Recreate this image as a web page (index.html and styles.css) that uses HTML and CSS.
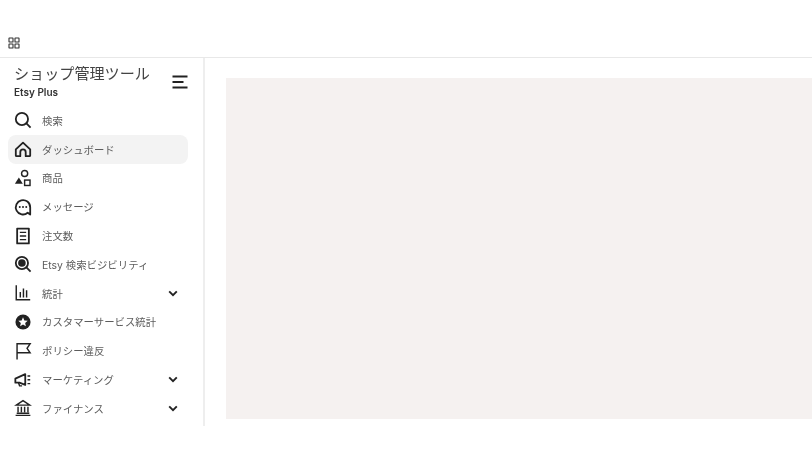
FILE: index.html
```html
<!DOCTYPE html>
<html lang="ja">
<head>
    <meta charset="UTF-8">
    <meta name="viewport" content="width=device-width, initial-scale=1.0">
    <title>ショップ管理ツール</title>
    <link rel="stylesheet" href="styles.css">
</head>
<body>
    <header class="top-bar">
        <svg class="apps-icon" viewBox="0 0 12 12" width="12" height="12">
            <rect x="1" y="1" width="4" height="4" rx="0.3"/>
            <rect x="7" y="1" width="4" height="4" rx="0.3"/>
            <rect x="1" y="7" width="4" height="4" rx="0.3"/>
            <rect x="7" y="7" width="4" height="4" rx="0.3"/>
        </svg>
    </header>

    <div class="layout">
        <aside class="sidebar">
            <div class="shop-head">
                <div class="shop-title">
                    <div class="shop-name">ショップ管理ツール</div>
                    <div class="shop-plan">Etsy Plus</div>
                </div>
                <svg class="menu-icon" viewBox="0 0 16 14" width="16" height="14">
                    <path d="M0.5 1.5H15.5M0.5 7H11.5M0.5 12.5H15.5"/>
                </svg>
            </div>

            <nav class="nav">
                <a class="nav-item">
                    <svg class="nav-icon" viewBox="0 0 20 20"><circle cx="8.8" cy="8.8" r="6.8"/><path d="M13.8 13.8L18.4 18.4"/></svg>
                    <span class="nav-label">検索</span>
                </a>
                <a class="nav-item active">
                    <svg class="nav-icon" viewBox="0 0 20 20"><path d="M2 10.5L10 3L18 10.5V17.2A0.8 0.8 0 0 1 17.2 18H13V13.5A3 3 0 0 0 7 13.5V18H2.8A0.8 0.8 0 0 1 2 17.2Z"/></svg>
                    <span class="nav-label">ダッシュボード</span>
                </a>
                <a class="nav-item">
                    <svg class="nav-icon" viewBox="0 0 20 20"><circle class="thin" cx="11.8" cy="5" r="3.4"/><path class="solid no-line" d="M5.4 9.4L9.8 16.4H1Z"/><rect class="thin" x="11.8" y="12.3" width="6" height="6"/></svg>
                    <span class="nav-label">商品</span>
                </a>
                <a class="nav-item">
                    <svg class="nav-icon" viewBox="0 0 20 20"><path d="M18 18.4L15.2 16.4A8 8 0 1 1 18 10.2V18.4Z"/><circle class="solid no-line" cx="6.4" cy="10" r="1.1"/><circle class="solid no-line" cx="10" cy="10" r="1.1"/><circle class="solid no-line" cx="13.6" cy="10" r="1.1"/></svg>
                    <span class="nav-label">メッセージ</span>
                </a>
                <a class="nav-item">
                    <svg class="nav-icon" viewBox="0 0 20 20"><rect x="3.5" y="1.8" width="13" height="16.4"/><path class="thin" d="M6.5 6H13.5M6.5 10H13.5M6.5 14H13.5"/></svg>
                    <span class="nav-label">注文数</span>
                </a>
                <a class="nav-item">
                    <svg class="nav-icon" viewBox="0 0 20 20"><circle cx="8.8" cy="8.8" r="6.8"/><circle class="solid no-line" cx="8.8" cy="8.8" r="4.2"/><path d="M13.8 13.8L18.4 18.4"/></svg>
                    <span class="nav-label">Etsy 検索ビジビリティ</span>
                </a>
                <a class="nav-item">
                    <svg class="nav-icon" viewBox="0 0 20 20"><path class="thin" d="M2.5 1.5V17.6H18"/><path class="thin" d="M7 9V15M10.5 5V15M14 7V15"/></svg>
                    <span class="nav-label">統計</span>
                    <svg class="chevron" viewBox="0 0 10 7" width="10" height="7"><path d="M1.2 1.4L5 5.2L8.8 1.4"/></svg>
                </a>
                <a class="nav-item">
                    <svg class="nav-icon" viewBox="0 0 20 20"><circle class="solid no-line" cx="10" cy="10" r="8.4"/><path class="star" d="M10 4.8L11.5 8.2L15.2 8.6L12.4 11L13.2 14.7L10 12.8L6.8 14.7L7.6 11L4.8 8.6L8.5 8.2Z"/></svg>
                    <span class="nav-label">カスタマーサービス統計</span>
                </a>
                <a class="nav-item">
                    <svg class="nav-icon" viewBox="0 0 20 20"><path class="thin" d="M3.4 19.5V2H17.9L14.5 7L17.9 12H3.4"/></svg>
                    <span class="nav-label">ポリシー違反</span>
                </a>
                <a class="nav-item">
                    <svg class="nav-icon" viewBox="0 0 20 20"><path d="M12.5 3.5V15.5L6 13H1.5V8.5L12.5 3.5Z"/><path class="thin" d="M5 13L6.2 16.5H9"/><path class="thin" d="M15 5.5H18M15 9.8H18M15 14H18"/></svg>
                    <span class="nav-label">マーケティング</span>
                    <svg class="chevron" viewBox="0 0 10 7" width="10" height="7"><path d="M1.2 1.4L5 5.2L8.8 1.4"/></svg>
                </a>
                <a class="nav-item">
                    <svg class="nav-icon" viewBox="0 0 20 20"><path class="thin" d="M10 1.8L17.5 6.8H2.5Z"/><path class="thin" d="M4.5 8.5V15M8.2 8.5V15M11.8 8.5V15M15.5 8.5V15"/><path class="thin" d="M3 15.8H17M1.8 18.2H18.2"/></svg>
                    <span class="nav-label">ファイナンス</span>
                    <svg class="chevron" viewBox="0 0 10 7" width="10" height="7"><path d="M1.2 1.4L5 5.2L8.8 1.4"/></svg>
                </a>
            </nav>
        </aside>

        <main class="content">
            <div class="placeholder"></div>
        </main>
    </div>
</body>
</html>
```

FILE: styles.css
```css
html, body {
    margin: 0;
    padding: 0;
    background: #fff;
    overflow: hidden;
}

body {
    width: 812px;
    height: 457px;
    font-family: "Inter", "Noto Sans CJK JP", sans-serif;
    color: #222;
}

.top-bar {
    height: 58px;
    box-sizing: border-box;
    border-bottom: 1px solid #e8e8e8;
    display: flex;
    align-items: flex-end;
    padding: 0 0 8px 7.5px;
}

.apps-icon {
    fill: none;
    stroke: #333;
    stroke-width: 1.1;
    filter: blur(0.3px);
}

.layout {
    display: flex;
    height: 368px;
}

.sidebar {
    width: 205px;
    box-sizing: border-box;
    border-right: 2px solid #eeeeee;
    padding: 7px 0 0 8px;
    filter: blur(0.35px);
}

.shop-head {
    display: flex;
    align-items: flex-start;
    justify-content: space-between;
    width: 180px;
    height: 38px;
    padding-left: 6px;
    box-sizing: border-box;
}

.shop-name {
    font-size: 15.1px;
    line-height: 18px;
    color: #444;
}

.shop-plan {
    font-size: 10px;
    line-height: 19px;
    font-weight: 600;
    color: #333;
}

.menu-icon {
    fill: none;
    stroke: #222;
    stroke-width: 1.8;
    margin-top: 10px;
    flex: none;
}

.nav {
    display: flex;
    flex-direction: column;
    margin-top: 3px;
}

.nav-item {
    display: flex;
    align-items: center;
    width: 180px;
    height: 28.8px;
    box-sizing: border-box;
    padding-left: 6px;
    border-radius: 8px;
}

.nav-item.active {
    background: #f3f3f3;
}

.nav-icon {
    width: 18px;
    height: 18px;
    flex: none;
    fill: none;
    stroke: #222;
    stroke-width: 2;
    stroke-linejoin: round;
}

.nav-icon .solid {
    fill: #222;
}

.nav-icon .no-line {
    stroke: none;
}

.nav-icon .thin {
    stroke-width: 1.6;
    stroke-linejoin: miter;
}

.nav-icon .star {
    fill: #fff;
    stroke: none;
}

.nav-label {
    margin-left: 10px;
    font-size: 10.4px;
    color: #5c5c5c;
    white-space: nowrap;
}

.chevron {
    margin-left: auto;
    margin-right: 10px;
    fill: none;
    stroke: #222;
    stroke-width: 1.9;
}

.content {
    flex: 1;
    padding: 20px 0 7px 20.5px;
}

.placeholder {
    height: 100%;
    background: #f5f1f0;
}
```
